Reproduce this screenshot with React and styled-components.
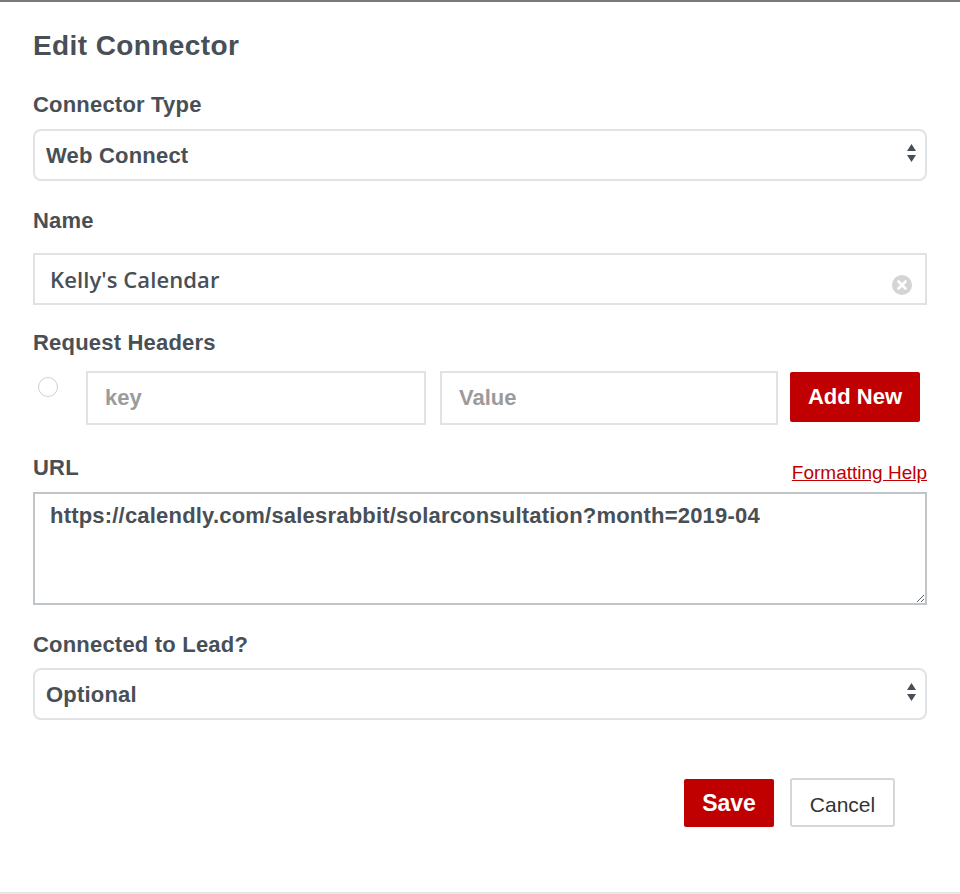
import React from 'react';
import styled, { createGlobalStyle } from 'styled-components';

const textColor = '#484f56';
const red = '#c00000';

const GlobalStyle = createGlobalStyle`
  html, body {
    margin: 0;
    padding: 0;
    background: #ffffff;
  }
  * {
    box-sizing: border-box;
  }
`;

const Modal = styled.div`
  width: 960px;
  height: 894px;
  border-top: 2px solid #7a7a7a;
  border-bottom: 2px solid #e6e6e6;
  padding: 28px 33px 0 33px;
  font-family: "Liberation Sans", Arial, sans-serif;
  color: ${textColor};
`;

const Title = styled.h2`
  margin: 0;
  font-size: 28px;
  line-height: 32px;
  font-weight: 700;
  letter-spacing: 0.4px;
`;

const Field = styled.div`
  margin-top: ${(p) => p.top}px;
`;

const LabelRow = styled.div`
  display: flex;
  justify-content: space-between;
  align-items: flex-end;
  margin-bottom: ${(p) => p.gap}px;
`;

const Label = styled.label`
  display: block;
  font-size: 22px;
  line-height: 24px;
  font-weight: 700;
  letter-spacing: 0.2px;
`;

const HelpLink = styled.a`
  font-size: 19px;
  line-height: 14px;
  color: ${red};
  text-decoration: underline;
  cursor: pointer;
`;

const SelectWrap = styled.div`
  position: relative;
`;

const Select = styled.select`
  appearance: none;
  width: 100%;
  height: 52px;
  padding: 0 40px 0 11px;
  border: 2px solid #dfe3e6;
  border-radius: 8px;
  background: #fff;
  font-family: "Liberation Sans", Arial, sans-serif;
  font-size: 22px;
  font-weight: 700;
  letter-spacing: 0.2px;
  color: ${textColor};
  outline: none;
`;

const Arrows = styled.svg`
  position: absolute;
  right: 10px;
  top: 14px;
  pointer-events: none;
`;

const InputWrap = styled.div`
  position: relative;
`;

const TextInput = styled.input`
  width: 100%;
  height: 52px;
  padding: 0 40px 0 15px;
  border: 2px solid #dfe3e6;
  border-radius: 0;
  font-family: "Open Sans", sans-serif;
  font-size: 22px;
  font-weight: 600;
  letter-spacing: 0.1px;
  color: ${textColor};
  outline: none;
`;

const ClearIcon = styled.svg`
  position: absolute;
  right: 15px;
  top: 22px;
`;

const HeaderRow = styled.div`
  display: flex;
  align-items: flex-start;
`;

const Radio = styled.input`
  appearance: none;
  flex: none;
  width: 20px;
  height: 20px;
  margin: 6px 28px 0 5px;
  border: 1px solid #cfcfcf;
  border-radius: 50%;
  background: #fff;
`;

const HeaderInput = styled.input`
  width: ${(p) => p.w}px;
  height: 54px;
  margin-right: ${(p) => p.gap}px;
  padding: 0 17px;
  border: 2px solid #dfe3e6;
  border-radius: 0;
  font-family: "Liberation Sans", Arial, sans-serif;
  font-size: 22px;
  font-weight: 700;
  color: ${textColor};
  outline: none;
  &::placeholder {
    color: #9b9b9b;
  }
`;

const RedButton = styled.button`
  width: ${(p) => p.w}px;
  height: ${(p) => p.h}px;
  margin-top: ${(p) => p.offset || 0}px;
  border: none;
  border-radius: 2px;
  background: ${red};
  color: #ffffff;
  font-family: "Liberation Sans", Arial, sans-serif;
  font-size: ${(p) => p.size || 22}px;
  font-weight: 700;
  cursor: pointer;
`;

const TextArea = styled.textarea`
  display: block;
  width: 100%;
  height: 113px;
  padding: 10px 15px;
  border: 2px solid #bfc5c9;
  border-radius: 0;
  font-family: "Liberation Sans", Arial, sans-serif;
  font-size: 22px;
  line-height: 24px;
  font-weight: 700;
  letter-spacing: 0.2px;
  color: ${textColor};
  outline: none;
  resize: vertical;
`;

const Footer = styled.div`
  display: flex;
  justify-content: flex-end;
  align-items: center;
  gap: 16px;
  margin-top: 57px;
  padding-right: 32px;
`;

const CancelButton = styled.button`
  width: 105px;
  height: 49px;
  padding: 5px 0 0 0;
  border: 2px solid #d6d6d6;
  border-radius: 3px;
  background: #ffffff;
  color: #333333;
  font-family: "Liberation Sans", Arial, sans-serif;
  font-size: 21px;
  cursor: pointer;
`;

const SelectArrows = () => (
  <Arrows width="11" height="22" viewBox="0 0 11 22">
    <path d="M5.5 1 L10 8 L1 8 Z" fill={textColor} />
    <path d="M1 12 L10 12 L5.5 19 Z" fill={textColor} />
  </Arrows>
);

const SelectField = ({ value, options }) => (
  <SelectWrap>
    <Select defaultValue={value}>
      {options.map((o) => (
        <option key={o}>{o}</option>
      ))}
    </Select>
    <SelectArrows />
  </SelectWrap>
);

export default function App() {
  return (
    <>
      <GlobalStyle />
      <Modal>
        <Title>Edit Connector</Title>

        <Field top={31}>
          <LabelRow gap={12}>
            <Label>Connector Type</Label>
          </LabelRow>
          <SelectField value="Web Connect" options={['Web Connect', 'Webhook']} />
        </Field>

        <Field top={28}>
          <LabelRow gap={20}>
            <Label>Name</Label>
          </LabelRow>
          <InputWrap>
            <TextInput defaultValue="Kelly's Calendar" />
            <ClearIcon width="20" height="20" viewBox="0 0 20 20">
              <circle cx="10" cy="10" r="10" fill="#d4d4d4" />
              <path d="M6.5 6.5 L13.5 13.5 M13.5 6.5 L6.5 13.5" stroke="#fff" strokeWidth="2.6" strokeLinecap="round" />
            </ClearIcon>
          </InputWrap>
        </Field>

        <Field top={26}>
          <LabelRow gap={16}>
            <Label>Request Headers</Label>
          </LabelRow>
          <HeaderRow>
            <Radio type="radio" name="header" />
            <HeaderInput w={340} gap={14} placeholder="key" />
            <HeaderInput w={338} gap={12} placeholder="Value" />
            <RedButton w={130} h={50} offset={1}>Add New</RedButton>
          </HeaderRow>
        </Field>

        <Field top={31}>
          <LabelRow gap={12}>
            <Label>URL</Label>
            <HelpLink>Formatting Help</HelpLink>
          </LabelRow>
          <TextArea defaultValue="https://calendly.com/salesrabbit/solarconsultation?month=2019-04" />
        </Field>

        <Field top={28}>
          <LabelRow gap={11}>
            <Label>Connected to Lead?</Label>
          </LabelRow>
          <SelectField value="Optional" options={['Optional', 'Required', 'None']} />
        </Field>

        <Footer>
          <RedButton w={90} h={48} offset={2} size={23}>Save</RedButton>
          <CancelButton>Cancel</CancelButton>
        </Footer>
      </Modal>
    </>
  );
}
